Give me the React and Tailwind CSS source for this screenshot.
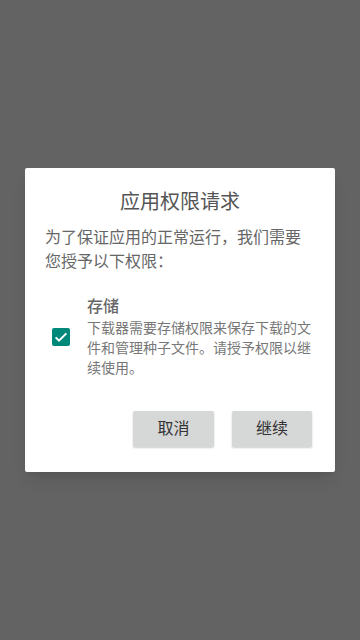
import { useState } from "react";

const font = { fontFamily: '"Roboto", "Noto Sans CJK SC", sans-serif' };

export default function App() {
  const [checked, setChecked] = useState(true);

  return (
    <div
      className="w-screen h-screen bg-[#636363] flex items-center justify-center"
      style={font}
    >
      <div className="w-[310px] bg-white rounded-[2px] shadow-lg pt-[20px] pb-[25px] px-[20px]">
        <div className="text-[20px] leading-[28px] text-center text-[#555555]">
          应用权限请求
        </div>
        <div className="mt-[10px] text-[16px] leading-[24px] text-[#666666]">
          为了保证应用的正常运行，我们需要您授予以下权限：
        </div>

        <div className="mt-[22px] flex items-center pl-[7px]">
          <div
            onClick={() => setChecked(!checked)}
            className={
              "w-[18px] h-[18px] rounded-[2px] shrink-0 flex items-center justify-center cursor-pointer " +
              (checked ? "bg-[#00897b]" : "border-2 border-[#757575]")
            }
          >
            {checked && (
              <svg width="16" height="16" viewBox="0 0 24 24">
                <path
                  d="M4 12.5l5 5L20 6.5"
                  fill="none"
                  stroke="white"
                  strokeWidth="3"
                />
              </svg>
            )}
          </div>
          <div className="ml-[17px] flex-1">
            <div className="text-[16px] leading-[22px] font-medium text-[#666666]">
              存储
            </div>
            <div className="text-[14px] leading-[20px] text-[#777777]">
              下载器需要存储权限来保存下载的文件和管理种子文件。请授予权限以继续使用。
            </div>
          </div>
        </div>

        <div className="mt-[33px] flex justify-end gap-[18px] pr-[3px]">
          <button className="w-[81px] h-[36px] bg-[#d6d7d7] rounded-[2px] shadow-[0_1px_2px_rgba(0,0,0,0.2)] text-[16px] text-[#333333]">
            取消
          </button>
          <button className="w-[80px] h-[36px] bg-[#d6d7d7] rounded-[2px] shadow-[0_1px_2px_rgba(0,0,0,0.2)] text-[16px] text-[#333333]">
            继续
          </button>
        </div>
      </div>
    </div>
  );
}
